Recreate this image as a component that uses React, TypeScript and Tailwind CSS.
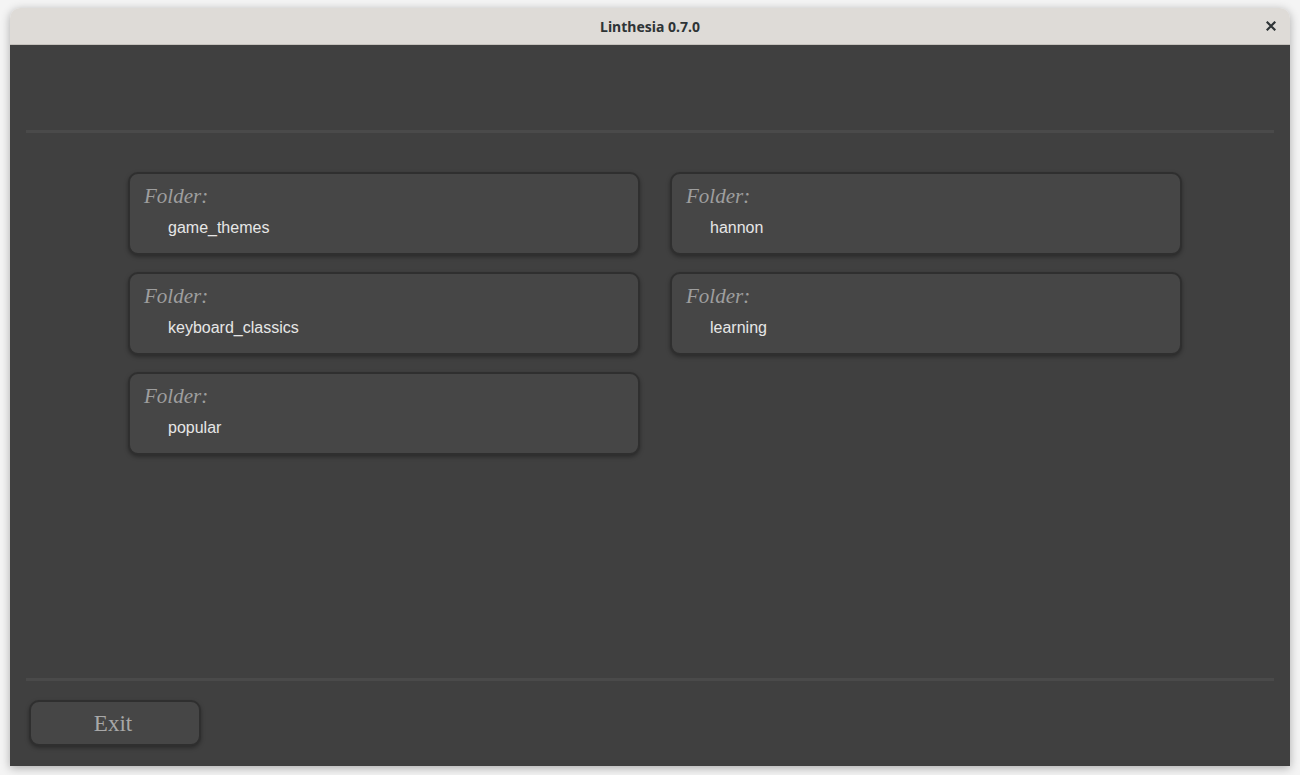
const folders = ["game_themes", "hannon", "keyboard_classics", "learning", "popular"]

const FolderCard = ({ name }: { name: string }) => (
  <div className="h-[83px] rounded-[10px] border-2 border-[#2f2f2f] bg-[#464646] shadow-[0_2px_4px_rgba(0,0,0,0.35)] px-[14px] pt-[9px]">
    <div className="text-[21px] leading-[26px] italic text-[#9e9e9e] font-['Liberation_Serif',serif]">Folder:</div>
    <div className="pl-[24px] pt-[9px] text-[16px] leading-[20px] text-[#e6e6e6] font-['Liberation_Sans',sans-serif]">{name}</div>
  </div>
)

export default function App() {
  return (
    <div className="w-[1300px] h-[775px] bg-[#f4f4f4] pt-[8px] pl-[10px]">
      <div className="w-[1280px] h-[758px] flex flex-col rounded-t-[10px] overflow-hidden shadow-[0_2px_10px_rgba(0,0,0,0.3)]">
        {/* title bar */}
        <div className="h-[37px] shrink-0 flex items-center justify-center relative bg-[#dedbd7] border-b border-[#c5c1bc]">
          <span className="text-[14px] font-bold text-[#2e3436] font-['Noto_Sans',sans-serif]">Linthesia 0.7.0</span>
          <span className="absolute right-[14px] top-[13px] text-[#2e3436]">
            <svg width="10" height="10" viewBox="0 0 10 10">
              <path d="M1.5 1.5 L8.5 8.5 M8.5 1.5 L1.5 8.5" stroke="currentColor" strokeWidth="2.2" strokeLinecap="square" />
            </svg>
          </span>
        </div>

        {/* content */}
        <div className="flex-1 bg-[#404040] flex flex-col px-[16px]">
          <div className="h-[85px] shrink-0" />
          <div className="h-[3px] bg-[#4a4a4a]" />
          <div className="flex-1 pt-[39px] pl-[102px]">
            <div className="grid grid-cols-[512px_512px] gap-x-[30px] gap-y-[17px]">
              {folders.map((f) => (
                <FolderCard key={f} name={f} />
              ))}
            </div>
          </div>
          <div className="h-[3px] bg-[#4a4a4a]" />
          <div className="h-[85px] shrink-0 pt-[19px] pl-[3px]">
            <button className="w-[172px] h-[46px] rounded-[10px] border-2 border-[#2f2f2f] bg-[#464646] shadow-[0_2px_4px_rgba(0,0,0,0.35)] pr-[4px] pt-[2px] text-[23px] text-[#a8a8a8] font-['Liberation_Serif',serif]">
              Exit
            </button>
          </div>
        </div>
      </div>
    </div>
  )
}
